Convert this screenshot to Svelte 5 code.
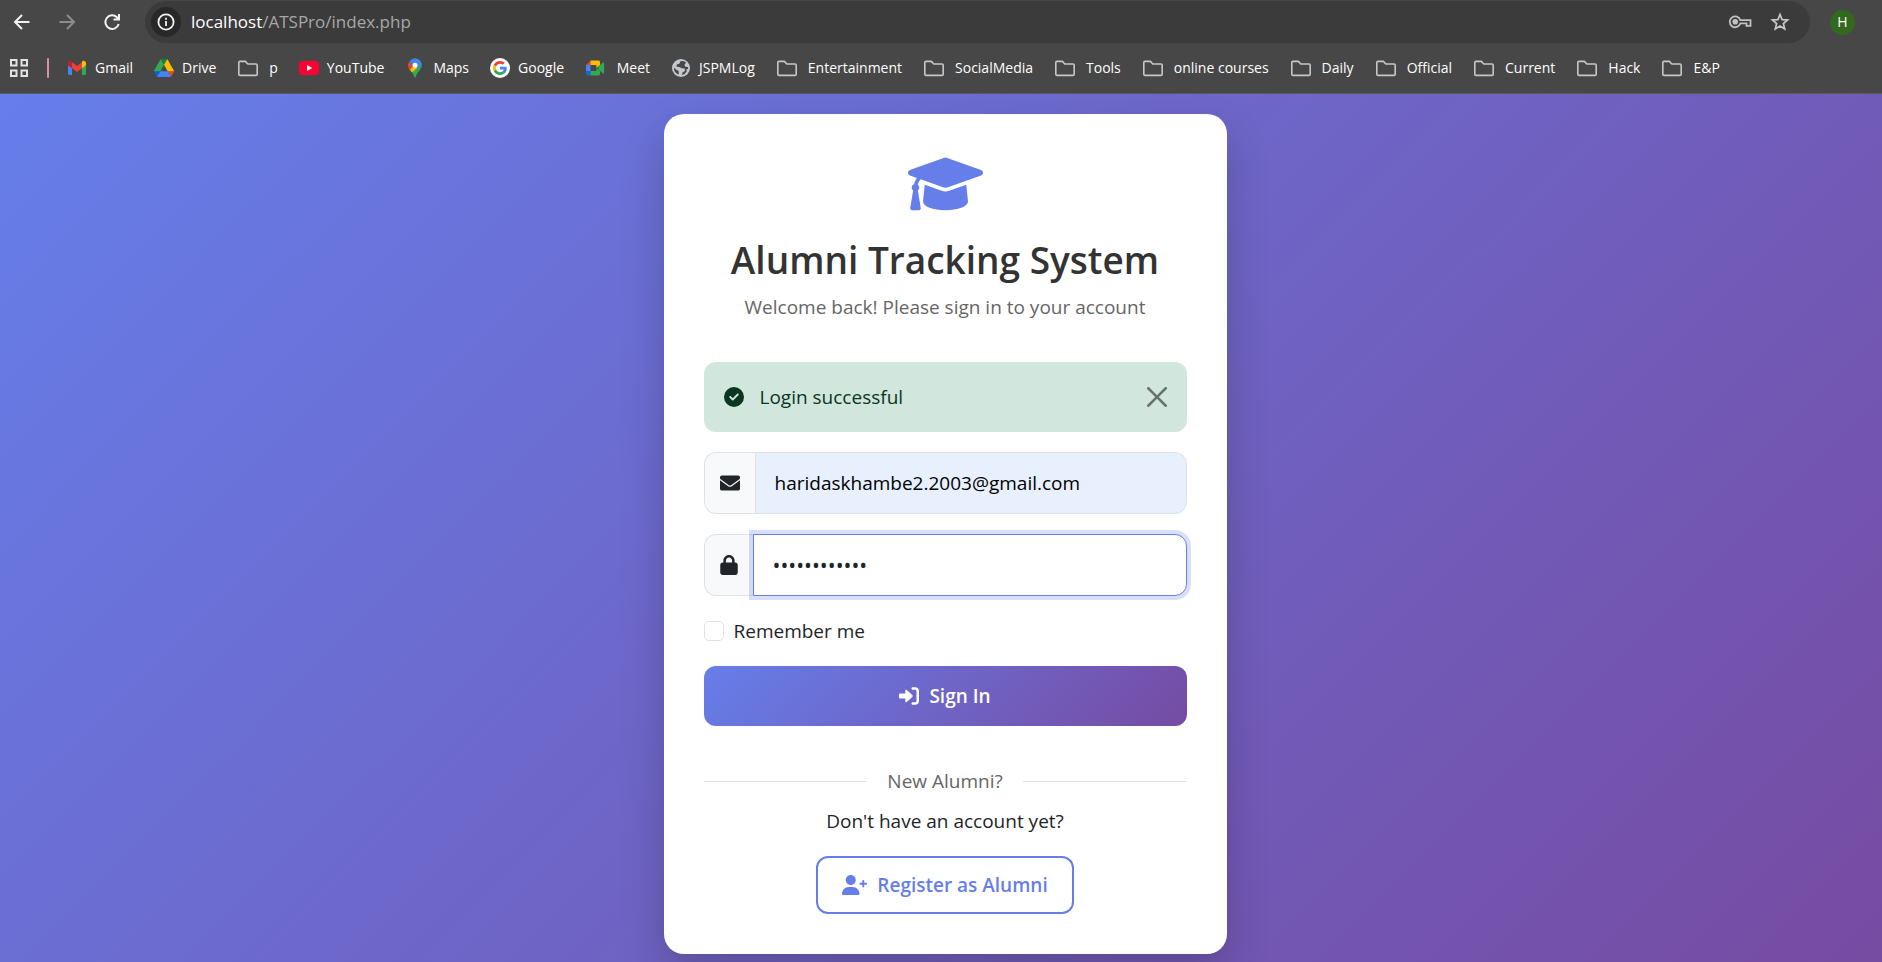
<script>
  let email = $state('haridaskhambe2.2003@gmail.com');
  let password = $state('alumni-pass1');
  let remember = $state(false);

  const bookmarks = [
    { icon: 'gmail', label: 'Gmail' },
    { icon: 'drive', label: 'Drive' },
    { icon: 'folder', label: 'p' },
    { icon: 'youtube', label: 'YouTube' },
    { icon: 'maps', label: 'Maps' },
    { icon: 'google', label: 'Google' },
    { icon: 'meet', label: '\u00a0Meet' },
    { icon: 'globe', label: 'JSPMLog' },
    { icon: 'folder', label: 'Entertainment' },
    { icon: 'folder', label: 'SocialMedia' },
    { icon: 'folder', label: 'Tools' },
    { icon: 'folder', label: 'online courses' },
    { icon: 'folder', label: 'Daily' },
    { icon: 'folder', label: 'Official' },
    { icon: 'folder', label: 'Current' },
    { icon: 'folder', label: 'Hack' },
    { icon: 'folder', label: 'E&P' }
  ];
</script>

{#snippet favicon(name)}
  {#if name === 'folder'}
    <svg width="22" height="20" viewBox="0 0 22 20" fill="none" stroke="#c7c7c7" stroke-width="1.6" stroke-linejoin="round">
      <path d="M1.8 4.6q0-1.2 1.2-1.2h5.4l2.4 2.6h8.2q1.2 0 1.2 1.2v9q0 1.2-1.2 1.2H3q-1.2 0-1.2-1.2z" />
    </svg>
  {:else if name === 'gmail'}
    <svg width="20" height="20" viewBox="0 0 20 20">
      <path fill="#4285f4" d="M1 7v8.800c0 .7.5 1.200 1.200 1.200H5V10z" />
      <path fill="#34a853" d="M15 10v7h2.800c.7 0 1.200-.5 1.200-1.200V7z" />
      <path fill="#fbbc04" d="M15 4.300V10.200l4-3V5c0-2-2.200-3-3.600-1.900z" />
      <path fill="#ea4335" d="M5 10.200V4.300l5 3.800 5-3.800v5.900l-5 3.800z" />
      <path fill="#c5221f" d="M1 5v2.200l4 3V4.300l-.4-1.200C3.200 2 1 3 1 5z" />
    </svg>
  {:else if name === 'drive'}
    <svg width="20" height="18" viewBox="0 0 87.3 78">
      <path fill="#0066da" d="m6.6 66.85 3.85 6.65c.8 1.4 1.95 2.5 3.3 3.3l13.75-23.8h-27.5c0 1.55.4 3.1 1.2 4.5z" />
      <path fill="#34a853" d="m43.650 25-13.750-23.800c-1.350.8-2.500 1.900-3.300 3.300l-25.400 44a9.060 9.060 0 0 0 -1.200 4.500h27.500z" />
      <path fill="#ea4335" d="m73.550 76.800c1.350-.8 2.500-1.900 3.300-3.300l1.600-2.750 7.650-13.250c.8-1.400 1.200-2.950 1.200-4.500h-27.500l5.850 11.500z" />
      <path fill="#188038" d="m43.650 25 13.750-23.800c-1.350-.8-2.900-1.200-4.500-1.200h-18.500c-1.600 0-3.150.450-4.500 1.200z" />
      <path fill="#4285f4" d="m59.800 53h-32.300l-13.750 23.800c1.350.8 2.900 1.200 4.500 1.200h50.800c1.600 0 3.150-.450 4.500-1.200z" />
      <path fill="#fbbc04" d="m73.400 26.500-12.700-22c-.8-1.400-1.950-2.500-3.300-3.300l-13.750 23.800 16.150 28h27.450c0-1.550-.4-3.100-1.200-4.500z" />
    </svg>
  {:else if name === 'youtube'}
    <svg width="20" height="20" viewBox="0 0 20 20">
      <rect x="0" y="3" width="20" height="14" rx="3.6" fill="#ff0033" />
      <path fill="#fff" d="M8 7v6l5.200-3z" />
    </svg>
  {:else if name === 'maps'}
    <svg width="20" height="20" viewBox="0 0 20 20">
      <defs>
        <clipPath id="pin-shape">
          <path d="M10 .5a6.700 6.700 0 0 0-6.700 6.700c0 2 .8 3.400 2 5 1.800 2.300 3.200 3.800 3.800 6.300.3 1.300 1.500 1.300 1.800 0 .6-2.500 2-4 3.800-6.300 1.200-1.600 2-3 2-5A6.700 6.700 0 0 0 10 .5z" />
        </clipPath>
      </defs>
      <g clip-path="url(#pin-shape)">
        <rect width="20" height="20" fill="#34a853" />
        <path fill="#fbbc04" d="M2 12 7.500 5l5.300 4.500L5.500 16z" />
        <path fill="#ea4335" d="M0 1h5.200L10 6.500 4.300 12.500 0 8z" />
        <path fill="#1a73e8" d="M4.600 2.600 12-1 8 9z" />
        <path fill="#4285f4" d="M8 6.200 13 0l6 5-6.500 5.500z" />
        <path fill="#4285f4" d="M5 2.500 10 0l5 2-7 5z" />
      </g>
      <circle cx="10" cy="7.2" r="2.5" fill="#fff" />
    </svg>
  {:else if name === 'google'}
    <svg width="20" height="20" viewBox="0 0 20 20">
      <circle cx="10" cy="10" r="10" fill="#fff" />
      <g transform="translate(3 3) scale(.292)">
        <path fill="#ea4335" d="M24 9.500c3.540 0 6.710 1.220 9.210 3.600l6.850-6.850C35.900 2.380 30.470 0 24 0 14.620 0 6.510 5.380 2.560 13.220l7.980 6.190C12.430 13.720 17.740 9.500 24 9.500z" />
        <path fill="#4285f4" d="M46.980 24.550c0-1.570-.15-3.090-.38-4.550H24v9.020h12.940c-.58 2.960-2.260 5.480-4.780 7.180l7.730 6c4.510-4.180 7.090-10.360 7.090-17.650z" />
        <path fill="#fbbc05" d="M10.530 28.590c-.48-1.450-.76-2.990-.76-4.590s.27-3.140.76-4.590l-7.980-6.190C.92 16.460 0 20.120 0 24c0 3.880.92 7.540 2.560 10.780l7.970-6.190z" />
        <path fill="#34a853" d="M24 48c6.480 0 11.930-2.130 15.890-5.810l-7.730-6c-2.150 1.450-4.920 2.300-8.160 2.300-6.260 0-11.570-4.220-13.470-9.910l-7.980 6.190C6.510 42.620 14.620 48 24 48z" />
      </g>
    </svg>
  {:else if name === 'meet'}
    <svg width="20" height="20" viewBox="0 0 20 20">
      <path fill="#ea4335" d="M1 7 5.500 2.500V7z" />
      <path fill="#4285f4" d="M1 7h4.500v6H1z" />
      <path fill="#1967d2" d="M1 13h4.500v4.500H2.200C1.500 17.500 1 17 1 16.300z" />
      <path fill="#fbbc04" d="M5.500 2.500h8c.8 0 1.500.6 1.500 1.400V8l-3.600 2V7H5.500z" />
      <path fill="#34a853" d="M5.500 13h5.900v-3l3.600 3v3.100c0 .8-.7 1.400-1.500 1.400h-8z" />
      <path fill="#188038" d="m11.400 10 3.600-3v6z" />
      <path fill="#34a853" d="m13.500 8.400 4.600-3.800c.5-.4 1-.1 1 .5v9.800c0 .6-.5.900-1 .5l-4.600-3.800z" />
    </svg>
  {:else}
    <svg width="20" height="20" viewBox="0 0 20 20">
      <circle cx="10" cy="10" r="9" fill="#c4c7cb" />
      <path fill="#474747" d="M9.500 3.200 8.300 5.800l-2.500.7-.3 2.300 3 .2 2.300 1.300 2.700.2.600 2.200-2.500 1.800-.6 2.500a7 7 0 0 0 4.800-3.800l-.6-1.700 1.800-.6.100-1.800-2.700-.3-1-1.900 1.600-2.400A7 7 0 0 0 9.500 3.200zM3 9.500l2.600 2.600 2 .7.300 3.800A7 7 0 0 1 3 9.500z" />
    </svg>
  {/if}
{/snippet}

<div class="browser">
  <header class="chrome">
    <div class="toolbar">
      <nav class="nav-buttons" aria-label="History">
        <button type="button" aria-label="Back">
          <svg width="20" height="20" viewBox="0 0 20 20" fill="none" stroke="#f2f2f2" stroke-width="2"><path d="M17.500 10H3.500M10 3 3 10l7 7" /></svg>
        </button>
        <button type="button" aria-label="Forward">
          <svg width="20" height="20" viewBox="0 0 20 20" fill="none" stroke="#8c8c8c" stroke-width="2"><path d="M2.500 10h14M10 3l7 7-7 7" /></svg>
        </button>
        <button type="button" aria-label="Reload">
          <svg width="20" height="20" viewBox="0 0 20 20" fill="none" stroke="#f2f2f2" stroke-width="2"><path d="M16.700 12a6.800 6.800 0 1 1-1.800-6.800l2 2M17 2v5.500h-5.500" /></svg>
        </button>
      </nav>
      <div class="omnibox">
        <button type="button" class="site-info" aria-label="View site information">
          <svg width="18" height="18" viewBox="0 0 18 18" fill="none" stroke="#f2f2f2" stroke-width="1.8"><circle cx="9" cy="9" r="7.6" /><path d="M9 8v5M9 4.800v1.900" /></svg>
        </button>
        <span class="url"><span class="host">localhost</span>/ATSPro/index.php</span>
        <button type="button" aria-label="Manage passwords">
          <svg width="24" height="20" viewBox="0 0 24 20" fill="none" stroke="#c2c2c2" stroke-width="1.8"><path d="M12.300 8.200h10.200v5.600h-4v-2.400h-6.200a5.400 5.400 0 1 1 0-3.200z" /><circle cx="7.2" cy="9.8" r="2.8" fill="#c2c2c2" stroke="none" /></svg>
        </button>
        <button type="button" aria-label="Bookmark this tab">
          <svg width="20" height="20" viewBox="0 0 20 20" fill="none" stroke="#c9c9c9" stroke-width="1.7"><path d="m10 2.500 2.100 5.100 5.500.4-4.200 3.600 1.300 5.400-4.700-2.900L5.300 17l1.300-5.400L2.400 8l5.500-.4z" /></svg>
        </button>
      </div>
      <button type="button" class="avatar" aria-label="Profile">H</button>
    </div>
    <nav class="bookmarks" aria-label="Bookmarks">
      <button type="button" class="apps" aria-label="Tab groups">
        <svg width="20" height="20" viewBox="0 0 20 20" fill="none" stroke="#e3e3e3" stroke-width="2"><path d="M2 2h5.500v5.500H2zM12.500 2H18v5.500h-5.500zM2 12.500h5.500V18H2zM12.500 12.500H18V18h-5.500z" /></svg>
      </button>
      <span class="separator"></span>
      {#each bookmarks as item}
        <a href="#{item.icon}" class="bookmark" class:folder={item.icon === 'folder'}>{@render favicon(item.icon)}<span>{item.label}</span></a>
      {/each}
    </nav>
  </header>

  <main>
    <section class="card">
      <div class="intro">
        <svg class="cap" width="75" height="60" viewBox="0 0 640 512" fill="currentColor"><path d="M623.100 136.900l-282.700-101.200c-13.730-4.910-28.700-4.910-42.430 0L16.050 136.900C6.438 140.400 0 149.600 0 160s6.438 19.650 16.050 23.090L76.070 204.600c-11.890 15.800-20.260 34.160-24.550 53.950C40.050 263.400 32 274.800 32 288c0 9.953 4.814 18.490 11.940 24.360l-24.830 149C17.480 471.100 25 480 34.890 480H93.110c9.887 0 17.410-8.879 15.780-18.630l-24.830-149C91.190 306.500 96 297.100 96 288c0-10.290-5.174-19.030-12.720-24.890c4.252-17.760 12.880-33.820 24.940-47.030l190.600 68.230c13.730 4.910 28.700 4.910 42.430 0l282.700-101.200C633.600 179.600 640 170.400 640 160S633.600 140.400 623.100 136.900zM351.100 314.400C341.700 318.100 330.900 320 320 320c-10.920 0-21.690-1.867-32-5.555L142.800 262.500L128 405.300C128 446.600 213.100 480 320 480c105.100 0 192-33.400 192-74.670l-14.780-142.900L351.100 314.400z" /></svg>
        <h1>Alumni Tracking System</h1>
        <p>Welcome back! Please sign in to your account</p>
      </div>

      <div class="alert" role="alert">
        <svg width="20" height="20" viewBox="0 0 512 512" fill="currentColor"><path d="M256 512A256 256 0 1 0 256 0a256 256 0 1 0 0 512zM369 209L241 337c-9.400 9.400-24.600 9.400-33.900 0l-64-64c-9.400-9.400-9.400-24.600 0-33.900s24.600-9.400 33.900 0l47 47L335 175c9.400-9.400 24.600-9.400 33.900 0s9.400 24.600 0 33.900z" /></svg>
        <span>Login successful</span>
        <button type="button" aria-label="Close">
          <svg width="20" height="20" viewBox="0 0 16 16"><path d="M.293.293a1 1 0 0 1 1.414 0L8 6.586 14.293.293a1 1 0 1 1 1.414 1.414L9.414 8l6.293 6.293a1 1 0 0 1-1.414 1.414L8 9.414l-6.293 6.293a1 1 0 0 1-1.414-1.414L6.586 8 .293 1.707a1 1 0 0 1 0-1.414z" /></svg>
        </button>
      </div>

      <form onsubmit={(event) => event.preventDefault()}>
        <div class="field">
          <label for="email" aria-label="Email address">
            <svg width="20" height="20" viewBox="0 0 512 512" fill="currentColor"><path d="M256 352c-16.500 0-33-5.100-47.100-15.300L0 187.900V400c0 26.500 21.500 48 48 48h416c26.500 0 48-21.500 48-48V187.900L303.100 336.700C289 346.900 272.500 352 256 352zM16 161.700l212.300 151.600c16.500 11.800 38.900 11.800 55.400 0L496 161.700c10-7.200 16-18.900 16-30.800V112c0-26.500-21.500-48-48-48H48C21.500 64 0 85.500 0 112v18.900c0 12.400 6 23.600 16 30.800z" /></svg>
          </label>
          <input id="email" class="filled" type="email" bind:value={email} />
        </div>
        <div class="field">
          <label for="password" aria-label="Password">
            <svg width="18" height="20" viewBox="0 0 448 512" fill="currentColor"><path d="M80 192V144C80 64.470 144.500 0 224 0C303.500 0 368 64.470 368 144V192H384C419.300 192 448 220.700 448 256V448C448 483.300 419.300 512 384 512H64C28.650 512 0 483.300 0 448V256C0 220.700 28.650 192 64 192H80zM144 192H304V144C304 99.820 268.200 64 224 64C179.800 64 144 99.820 144 144V192z" /></svg>
          </label>
          <input id="password" class="active" type="password" bind:value={password} />
        </div>
        <div class="remember">
          <input id="remember" type="checkbox" bind:checked={remember} />
          <label for="remember">Remember me</label>
        </div>
        <button type="submit" class="primary">
          <svg width="20" height="20" viewBox="0 0 512 512" fill="currentColor"><path d="M344.700 238.500l-144.100-136C193.700 95.970 183.400 94.170 174.600 97.950C165.800 101.800 160.100 110.400 160.100 120V192H32.020C14.330 192 0 206.300 0 224v64c0 17.680 14.330 32 32.020 32h128.100v72c0 9.578 5.707 18.250 14.510 22.050c8.803 3.781 19.030 1.984 26-4.594l144.100-136C354.300 264.400 354.300 247.600 344.700 238.500zM416 32h-64c-17.670 0-32 14.330-32 32s14.330 32 32 32h64c17.670 0 32 14.330 32 32v256c0 17.670-14.330 32-32 32h-64c-17.670 0-32 14.330-32 32s14.330 32 32 32h64c53.020 0 96-42.980 96-96V128C512 74.980 469 32 416 32z" /></svg>
          Sign In
        </button>
      </form>

      <div class="divider"><span>New Alumni?</span></div>
      <p class="prompt">Don't have an account yet?</p>
      <a class="register" href="#register">
        <svg width="25" height="20" viewBox="0 0 640 512" fill="currentColor"><path d="M224 256c70.700 0 128-57.310 128-128S294.700 0 224 0C153.300 0 96 57.310 96 128S153.300 256 224 256zM274.700 304H173.300C77.610 304 0 381.600 0 477.300C0 496.500 15.520 512 34.660 512h378.700C432.500 512 448 496.500 448 477.300C448 381.600 370.400 304 274.700 304zM616 200h-48v-48C568 138.800 557.300 128 544 128s-24 10.750-24 24v48h-48C458.800 200 448 210.800 448 224s10.750 24 24 24h48v48C520 309.300 530.800 320 544 320s24-10.750 24-24v-48h48C629.300 248 640 237.300 640 224S629.300 200 616 200z" /></svg>
        Register as Alumni
      </a>
    </section>
  </main>
</div>

<style>
  :global(body) {
    margin: 0;
  }

  .browser,
  .browser * {
    box-sizing: border-box;
  }

  .browser {
    display: flex;
    flex-direction: column;
    min-height: 100vh;
    font-family: 'Open Sans', 'Noto Sans', sans-serif;
    font-size: 19px;
    line-height: 30px;
    color: #212529;
  }

  svg {
    display: block;
    flex: none;
  }

  button {
    display: flex;
    align-items: center;
    justify-content: center;
    padding: 0;
    border: 0;
    background: none;
    font: inherit;
    color: inherit;
    cursor: pointer;
  }

  a {
    color: inherit;
    text-decoration: none;
  }

  p,
  h1 {
    margin: 0;
  }

  .chrome {
    background: #474747;
    border-bottom: 1px solid #5a5a5a;
    color: #fff;
  }

  .toolbar {
    display: flex;
    align-items: center;
    padding: 1px 27px 0 12px;
  }

  .nav-buttons {
    display: flex;
    gap: 25px;
    margin-right: 23px;
  }

  .omnibox {
    display: flex;
    flex: 1;
    align-items: center;
    gap: 18px;
    height: 42px;
    padding: 0 20px 0 6px;
    border-radius: 21px;
    background: #3b3b3b;
  }

  .site-info {
    width: 30px;
    height: 30px;
    border-radius: 50%;
    background: #282828;
  }

  .url {
    flex: 1;
    margin-left: -8px;
    font-size: 17px;
    color: #a8a8a8;
  }

  .host {
    color: #fff;
  }

  .avatar {
    width: 25px;
    height: 25px;
    margin-left: 20px;
    border-radius: 50%;
    background: #33691e;
    font-size: 14px;
  }

  .bookmarks {
    display: flex;
    align-items: center;
    height: 50px;
    padding: 0 9px;
    font-size: 14px;
  }

  .separator {
    width: 2px;
    height: 20px;
    margin: 0 18px;
    border-radius: 1px;
    background: #d98fa3;
  }

  .bookmark {
    display: flex;
    align-items: center;
    gap: 8px;
    margin-right: 21px;
    white-space: nowrap;
  }

  .folder {
    gap: 10px;
  }

  main {
    display: flex;
    flex: 1;
    align-items: flex-start;
    justify-content: center;
    padding: 20px 12px 7px 20px;
    background: linear-gradient(135deg, #667eea 0%, #764ba2 100%);
  }

  .card {
    display: flex;
    flex-direction: column;
    width: 100%;
    max-width: 563px;
    padding: 40px;
    border-radius: 20px;
    background: #fff;
    box-shadow: 0 19px 44px rgba(0, 0, 0, 0.2);
  }

  .intro {
    display: flex;
    flex-direction: column;
    align-items: center;
    margin-bottom: 40px;
    text-align: center;
    color: #666;
  }

  .cap {
    color: #667eea;
  }

  h1 {
    margin: 22px 0 8px;
    font-size: 37px;
    font-weight: 600;
    line-height: 48px;
    color: #333;
  }

  .alert {
    display: flex;
    align-items: center;
    height: 70px;
    padding: 0 20px;
    border-radius: 12px;
    background: #d1e7dd;
    color: #0a3622;
  }

  .alert span {
    flex: 1;
    margin-left: 16px;
  }

  .alert button {
    opacity: 0.5;
  }

  form {
    display: flex;
    flex-direction: column;
    gap: 20px;
    margin: 20px 0 40px;
  }

  .field {
    display: flex;
    height: 62px;
  }

  .field label {
    display: flex;
    align-items: center;
    padding: 0 15px;
    border: 1px solid #dee2e6;
    border-right: 0;
    border-radius: 12px 0 0 12px;
    background: #f8f9fa;
  }

  .field input {
    flex: 1;
    min-width: 0;
    padding: 0 19px;
    border: 1px solid #dee2e6;
    border-radius: 0 12px 12px 0;
    outline: 0;
    background: #fff;
    font: inherit;
    color: #212529;
  }

  .field .filled {
    background: #e8f0fe;
    color: #000;
  }

  .field .active {
    border-color: #667eea;
    box-shadow: 0 0 0 4px rgba(102, 126, 234, 0.25);
    font-size: 21px;
  }

  .remember {
    display: flex;
    align-items: center;
    gap: 10px;
  }

  .remember input {
    width: 20px;
    height: 20px;
    margin: 0;
    border: 1px solid #dee2e6;
    border-radius: 5px;
    background: #fff;
    appearance: none;
  }

  .remember input:checked {
    background: #667eea;
  }

  .primary {
    gap: 10px;
    height: 60px;
    border-radius: 12px;
    background: linear-gradient(135deg, #667eea 0%, #764ba2 100%);
    font-weight: 600;
    color: #fff;
  }

  .divider {
    display: flex;
    align-items: center;
    gap: 20px;
    margin-bottom: 10px;
    color: #666;
  }

  .divider::before,
  .divider::after {
    content: '';
    flex: 1;
    height: 1px;
    background: #dee2e6;
  }

  .prompt {
    margin-bottom: 20px;
    text-align: center;
  }

  .register {
    display: flex;
    align-items: center;
    align-self: center;
    gap: 10px;
    height: 58px;
    padding: 0 24px;
    border: 2px solid #667eea;
    border-radius: 12px;
    font-weight: 600;
    color: #667eea;
  }
</style>
